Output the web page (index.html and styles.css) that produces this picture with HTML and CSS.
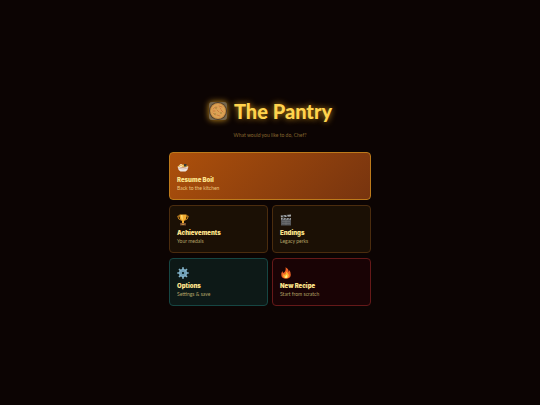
FILE: index.html
```html
<!DOCTYPE html>
<html lang="en">
<head>
    <meta charset="UTF-8">
    <meta name="viewport" content="width=device-width, initial-scale=1.0">
    <title>The Pantry</title>
    <link rel="stylesheet" href="styles.css">
</head>
<body>
    <main class="menu">
        <h1 class="menu-title">
            <svg class="logo" viewBox="0 0 20 20" aria-hidden="true">
                <rect x="1" y="1" width="18" height="18" rx="3" fill="#75664c"/>
                <circle cx="10" cy="10" r="9" fill="#4b3b2b"/>
                <circle cx="10" cy="10" r="8" fill="#c98f45"/>
                <circle cx="10" cy="10" r="7" fill="#dba255"/>
                <g fill="none" stroke="#cc7138" stroke-width=".8" stroke-linecap="round">
                    <path d="M5 8q2-3 4-2M11 5l3 1M5 12l2 2M9 9l2 2M13 9l2 2M9 14l3 1M7 10l-2 0M12 7l1 1"/>
                </g>
                <g fill="#b08a42">
                    <circle cx="8" cy="7" r="1"/>
                    <circle cx="13" cy="12" r="1"/>
                    <circle cx="7" cy="13" r="1"/>
                </g>
            </svg>
            <span>The Pantry</span>
        </h1>
        <p class="menu-subtitle">What would you like to do, Chef?</p>
        <div class="menu-grid">
            <button type="button" class="card card-resume">
                <svg class="icon" viewBox="0 0 12 12" aria-hidden="true">
                    <path d="M1 5q5-3 10 0v1H1z" fill="#e8b64c"/>
                    <circle cx="4" cy="4.500" r="1.500" fill="#fff0c5"/>
                    <circle cx="4" cy="4.500" r=".7" fill="#f0a127"/>
                    <path d="M7 3h2.500v2.500H7z" fill="#353b35"/>
                    <path d="M.5 5.500q5.500 2 11 0Q11 9 8.500 10.500h-5Q1 9 .5 5.500z" fill="#eee5df"/>
                    <path d="M1 7q5 2 10 0" fill="none" stroke="#c99b8d" stroke-width=".5"/>
                </svg>
                <span class="card-title">Resume Boil</span>
                <span class="card-text">Back to the kitchen</span>
            </button>
            <button type="button" class="card">
                <svg class="icon" viewBox="0 0 12 12" aria-hidden="true">
                    <path d="M3 2H.8q0 3.500 3 4M9 2h2.200q0 3.500-3 4" fill="none" stroke="#e79a25" stroke-width=".9"/>
                    <path d="M2.500.5h7Q9.500 6 7 7v2H5V7Q2.500 6 2.500.5z" fill="#f5ae31"/>
                    <path d="M4 1h1.500l.3 5Q4 5 4 1z" fill="#ffdc73"/>
                    <path d="M3 9h6v2.500H3z" fill="#704831"/>
                    <path d="M4.500 9.700h3v1h-3z" fill="#e3a844"/>
                </svg>
                <span class="card-title">Achievements</span>
                <span class="card-text">Your medals</span>
            </button>
            <button type="button" class="card">
                <svg class="icon" viewBox="0 0 12 12" aria-hidden="true">
                    <path d="M1 4h10v7.500H1z" fill="#55575a"/>
                    <path d="M.7 1.500L11 .5v2L1 3.500z" fill="#a5a7a8"/>
                    <path d="M2 1.400l1.500-.1L5 3.100l-1.600.1zM5.500 1l1.500-.1 1.500 1.800-1.600.2z" fill="#3c3e40"/>
                    <path d="M1 4h10v1.600H1z" fill="#a5a7a8"/>
                    <path d="M3 4h1.500L3.300 5.600H1.800zM6 4h1.500L6.300 5.600H4.800zM9 4h1.500L9.300 5.600H7.800z" fill="#3c3e40"/>
                    <path d="M2 7.500h8M2 9.500h8M6 6v5" stroke="#77797b" stroke-width=".5"/>
                </svg>
                <span class="card-title">Endings</span>
                <span class="card-text">Legacy perks</span>
            </button>
            <button type="button" class="card card-options">
                <svg class="icon" viewBox="0 0 12 12" aria-hidden="true">
                    <path d="M6 .3v11.400M.3 6h11.400M2 2l8 8M10 2l-8 8" stroke="#83b3ca" stroke-width="1.700"/>
                    <circle cx="6" cy="6" r="4" fill="#83b3ca"/>
                    <circle cx="6" cy="6" r="2.500" fill="none" stroke="#58889f" stroke-width=".6"/>
                    <circle cx="6" cy="6" r="1.300" fill="#142c31"/>
                </svg>
                <span class="card-title">Options</span>
                <span class="card-text">Settings &amp; save</span>
            </button>
            <button type="button" class="card card-new">
                <svg class="icon" viewBox="0 0 12 12" aria-hidden="true">
                    <path d="M5.500.2Q9 2 8.600 5q.8-.6.6-2Q11 5 10.800 8 10.300 11.800 6 11.800T1.300 8Q1 5.800 2.500 4q0 1.500.8 2Q6.500 4 5.500.2z" fill="#ef6226"/>
                    <path d="M6 4.500Q9.200 7 8.800 9 8.300 11.300 6 11.300T3.200 9Q3 8 3.800 7l1 1Q6.500 6.500 6 4.500z" fill="#ffb630"/>
                    <path d="M6.200 7.500Q7.700 9 7.300 10q-.4 1-1.300 1T4.700 10Q6 9.200 6.200 7.500z" fill="#fff08a"/>
                </svg>
                <span class="card-title">New Recipe</span>
                <span class="card-text">Start from scratch</span>
            </button>
        </div>
    </main>
</body>
</html>
```
FILE: styles.css
```css
* {
    box-sizing: border-box;
}
body {
    margin: 0;
    min-height: 100vh;
    display: flex;
    justify-content: center;
    align-items: center;
    background-color: #0c0403;
    font-family: Lato, "Open Sans", sans-serif;
}
.menu {
    width: 100%;
    max-width: 202px;
}
.menu-title {
    display: flex;
    justify-content: center;
    align-items: center;
    gap: 6px;
    margin: 0 0 9px;
    font-size: 20px;
    font-weight: 900;
    line-height: 22px;
    color: #ffd34d;
    text-shadow: 0 0 6px rgba(251, 180, 36, 0.8);
}
.logo {
    width: 20px;
    height: 20px;
    filter: drop-shadow(0 0 3px rgba(251, 180, 36, 0.8));
}
.menu-subtitle {
    margin: 0 0 13px;
    font-size: 5px;
    line-height: 8px;
    text-align: center;
    color: #87672f;
}
.menu-grid {
    display: grid;
    grid-template-columns: 1fr 1fr;
    gap: 5px 4px;
}
.card {
    display: flex;
    flex-direction: column;
    align-items: flex-start;
    padding: 8px 7px 7px;
    border: 1px solid #4b2c0e;
    border-radius: 4px;
    background-color: #1b1005;
    font-family: inherit;
    text-align: left;
    cursor: pointer;
}
.card-resume {
    grid-column: 1 / -1;
    border-color: #bd7a1b;
    background: linear-gradient(135deg, #ad500b, #77340f) border-box;
}
.card-options {
    border-color: #164643;
    background-color: #0d1917;
}
.card-new {
    border-color: #651919;
    background-color: #190305;
}
.icon {
    width: 12px;
    height: 12px;
    margin-bottom: 3px;
}
.card-title {
    font-family: Inter, "Open Sans", sans-serif;
    font-size: 6px;
    font-weight: 900;
    line-height: 8px;
    margin-bottom: 1px;
    color: #fde38a;
}
.card-text {
    font-size: 5px;
    line-height: 7px;
    color: #b3a266;
}
.card-resume .card-text {
    color: #f0c67c;
}
```
